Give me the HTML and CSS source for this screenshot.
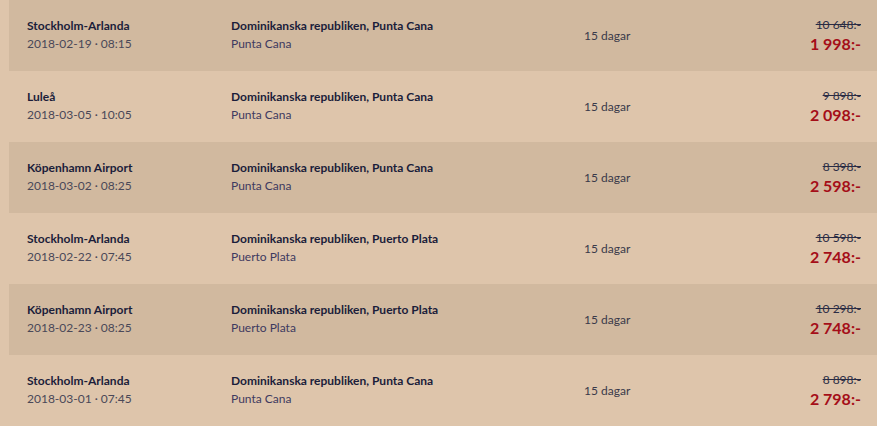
FILE: index.html
```html
<!DOCTYPE html>
<html lang="sv">
<head>
	<meta charset="UTF-8">
	<title>Resor</title>
<link rel="stylesheet" href="styles.css">
</head>
<body>
	<div class="list">
		<div class="trip dark">
			<div class="from"><b>Stockholm-Arlanda</b><span>2018-02-19 · 08:15</span></div>
			<div class="to"><b>Dominikanska republiken, Punta Cana</b><span>Punta Cana</span></div>
			<div class="days">15 dagar</div>
			<div class="price"><s>10 648:-</s><strong>1 998:-</strong></div>
		</div>
		<div class="trip">
			<div class="from"><b>Luleå</b><span>2018-03-05 · 10:05</span></div>
			<div class="to"><b>Dominikanska republiken, Punta Cana</b><span>Punta Cana</span></div>
			<div class="days">15 dagar</div>
			<div class="price"><s>9 898:-</s><strong>2 098:-</strong></div>
		</div>
		<div class="trip dark">
			<div class="from"><b>Köpenhamn Airport</b><span>2018-03-02 · 08:25</span></div>
			<div class="to"><b>Dominikanska republiken, Punta Cana</b><span>Punta Cana</span></div>
			<div class="days">15 dagar</div>
			<div class="price"><s>8 398:-</s><strong>2 598:-</strong></div>
		</div>
		<div class="trip">
			<div class="from"><b>Stockholm-Arlanda</b><span>2018-02-22 · 07:45</span></div>
			<div class="to"><b>Dominikanska republiken, Puerto Plata</b><span>Puerto Plata</span></div>
			<div class="days">15 dagar</div>
			<div class="price"><s>10 598:-</s><strong>2 748:-</strong></div>
		</div>
		<div class="trip dark">
			<div class="from"><b>Köpenhamn Airport</b><span>2018-02-23 · 08:25</span></div>
			<div class="to"><b>Dominikanska republiken, Puerto Plata</b><span>Puerto Plata</span></div>
			<div class="days">15 dagar</div>
			<div class="price"><s>10 298:-</s><strong>2 748:-</strong></div>
		</div>
		<div class="trip">
			<div class="from"><b>Stockholm-Arlanda</b><span>2018-03-01 · 07:45</span></div>
			<div class="to"><b>Dominikanska republiken, Punta Cana</b><span>Punta Cana</span></div>
			<div class="days">15 dagar</div>
			<div class="price"><s>8 898:-</s><strong>2 798:-</strong></div>
		</div>
	</div>
</body>
</html>
```

FILE: styles.css
```css
body{
	margin: 0;
	background: #dec5ab;
	font-family: Lato, "Open Sans", sans-serif;
	color: #1b1d3a;
	overflow: hidden;
}
.list{
	padding-left: 9px;
}
.trip{
	height: 71px;
	box-sizing: border-box;
	display: grid;
	grid-template-columns: 204px 353px 1fr auto;
	align-items: center;
	padding: 0 16px 2px 18px;
	font-size: 12px;
	line-height: 18px;
}
.dark{
	background: #d1b99f;
}
.from,.to,.price{
	display: flex;
	flex-direction: column;
}
.from b,.to b{
	font-weight: bold;
	color: #1b1d3a;
}
.from span{
	color: #4a4858;
}
.to span{
	color: #3e3a60;
}
.days{
	padding-top: 2px;
	color: #3a3a4a;
}
.price{
	align-items: flex-end;
}
.price s{
	color: #2a2c44;
}
.price strong{
	font-size: 16px;
	line-height: 19px;
	font-weight: bold;
	color: #a50e18;
}
```
